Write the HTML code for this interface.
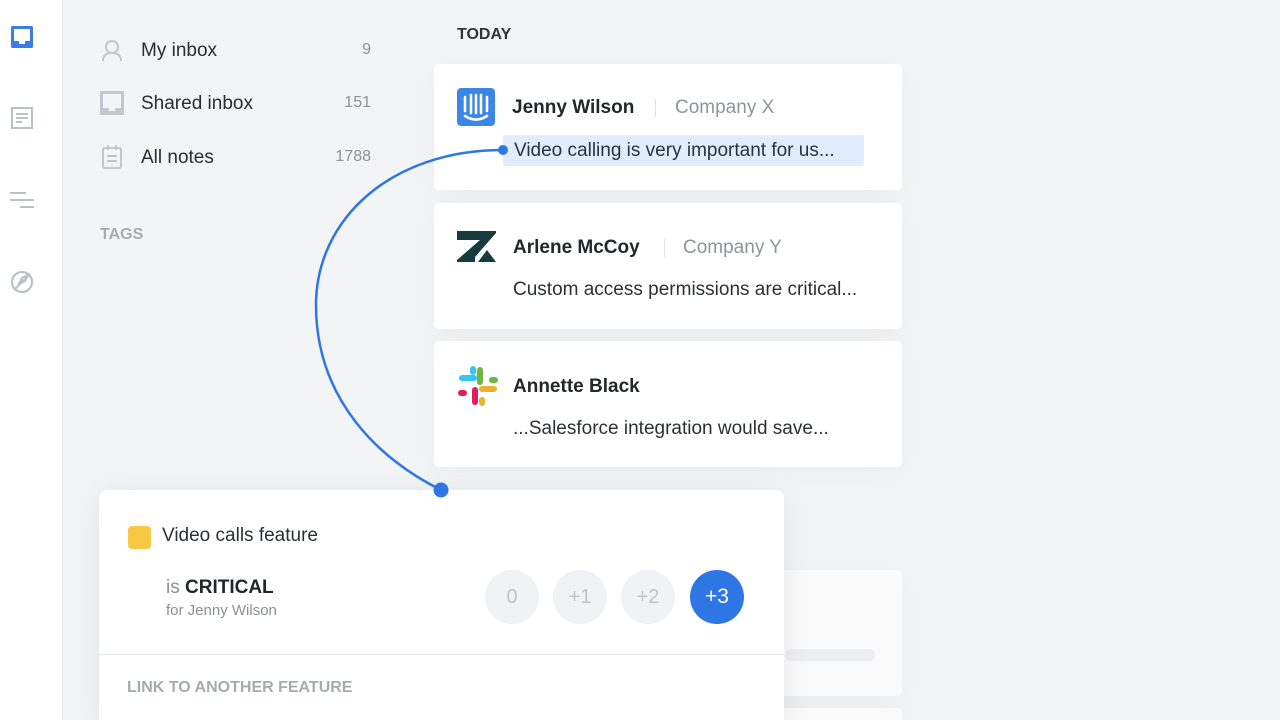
<!DOCTYPE html>
<html style="width:1280px;height:720px;overflow:hidden"><head><style>
*{margin:0;padding:0;box-sizing:border-box}
body{width:1280px;height:720px;overflow:hidden;background:#f3f4f6;font-family:"Liberation Sans",sans-serif;position:relative;color:#22252b}
.rail{position:absolute;left:0;top:0;width:63px;height:720px;background:#fff;border-right:1px solid #e6e8ec}
.abs{position:absolute}
.nav{position:absolute;left:141px;font-size:19px;color:#2a2d33}
.cnt{position:absolute;right:909px;font-size:16px;color:#8d9198;text-align:right}
.card{position:absolute;left:434px;width:468px;background:#fff;border-radius:5px;box-shadow:0 6px 30px rgba(0,0,0,.04)}
.name{position:absolute;font-size:19px;font-weight:bold;color:#23262b}
.co{position:absolute;font-size:19px;color:#8f949b}
.msg{position:absolute;font-size:19px;color:#2d3036}
.sep{position:absolute;width:1px;height:18px;background:#dcdfe3}
.circ{position:absolute;top:570px;width:54px;height:54px;border-radius:50%;background:#f1f2f4;color:#c0c4c9;font-size:20px;text-align:center;line-height:54px}
</style></head><body>
<div class="rail"></div>
<svg class="abs" style="left:10px;top:25px" width="26" height="26" viewBox="0 0 26 26"><rect x="1" y="1" width="22" height="22" rx="1.5" fill="#3b7de6"/><rect x="4" y="4" width="16" height="12" fill="#fff"/><rect x="9" y="16" width="6" height="3" fill="#fff"/></svg>
<svg class="abs" style="left:10px;top:106px" width="26" height="26" viewBox="0 0 26 26" fill="none" stroke="#bcc1c8" stroke-width="2"><rect x="2" y="2" width="20" height="20"/><path d="M6 8h12M6 12h12M6 16h6"/></svg>
<svg class="abs" style="left:10px;top:190px" width="26" height="20" viewBox="0 0 26 20" stroke="#bcc1c8" stroke-width="2"><path d="M0 3h16M0 10h24M10 17h14"/></svg>
<svg class="abs" style="left:10px;top:269px" width="26" height="26" viewBox="0 0 26 26" fill="none" stroke="#bcc1c8" stroke-width="2.2"><circle cx="12" cy="13" r="10"/><path d="M4 21L20 5M9 15l3-6 6-3-3 6z"/></svg>
<svg class="abs" style="left:101px;top:39px" width="22" height="24" viewBox="0 0 22 24" fill="none" stroke="#c3c7cd" stroke-width="2"><circle cx="11" cy="8" r="6"/><path d="M2 22c0-6 4-8 9-8s9 2 9 8"/></svg>
<div class="nav" style="top:40px">My inbox</div><div class="cnt" style="top:41px">9</div>
<svg class="abs" style="left:100px;top:91px" width="24" height="24" viewBox="0 0 24 24"><rect x="0" y="0" width="24" height="24" rx="1" fill="#c3c7cd"/><rect x="3" y="3" width="18" height="14" fill="#f3f4f6"/><rect x="9" y="17" width="6" height="3" fill="#f3f4f6"/></svg>
<div class="nav" style="top:93px">Shared inbox</div><div class="cnt" style="top:94px">151</div>
<svg class="abs" style="left:101px;top:144px" width="22" height="26" viewBox="0 0 22 26" fill="none" stroke="#c3c7cd" stroke-width="2"><rect x="2" y="4" width="18" height="20" rx="2"/><path d="M7 1v5M15 1v5M6 12h10M6 17h10"/></svg>
<div class="nav" style="top:147px">All notes</div><div class="cnt" style="top:148px">1788</div>
<div class="abs" style="left:100px;top:226px;font-size:16px;font-weight:bold;color:#a6abb2">TAGS</div>
<div class="abs" style="left:457px;top:26px;font-size:16px;font-weight:bold;color:#30343a">TODAY</div>
<div class="card" style="top:64px;height:126px"></div>
<div class="card" style="top:203px;height:126px"></div>
<div class="card" style="top:341px;height:126px"></div>
<div class="card" style="top:570px;height:126px;left:740px;width:162px;background:#fafafb"></div>
<div class="abs" style="left:785px;top:649px;width:90px;height:12px;border-radius:6px;background:#eceef1"></div>
<div class="card" style="top:708px;height:30px;left:740px;width:162px;background:#fafafb"></div>
<svg class="abs" style="left:457px;top:88px" width="38" height="38" viewBox="0 0 38 38"><rect width="38" height="38" rx="4" fill="#3b86e6"/><g stroke="#fff" stroke-width="2.6" stroke-linecap="round"><path d="M8 9v14M14 7v18M19 7v18M24 7v18M30 9v14"/><path d="M8 28q11 7 22 0" fill="none"/></g></svg>
<div class="name" style="left:512px;top:97px">Jenny Wilson</div><div class="sep" style="left:655px;top:99px"></div><div class="co" style="left:675px;top:97px">Company X</div>
<div class="abs" style="left:503px;top:135px;width:361px;height:31px;background:#e1ecfc;border-radius:2px"></div>
<div class="msg" style="left:514px;top:140px;color:#2a3440">Video calling is very important for us...</div>
<svg class="abs" style="left:457px;top:231px" width="39" height="31" viewBox="0 0 39 31" fill="#173a3f"><polygon points="0,0 39,0 39,2 18,26 18,31 0,31 0,29 23,9 0,9"/><polygon points="21,31 39,31 30,19"/></svg>
<div class="name" style="left:513px;top:237px">Arlene McCoy</div><div class="sep" style="left:664px;top:239px"></div><div class="co" style="left:683px;top:237px">Company Y</div>
<div class="msg" style="left:513px;top:279px">Custom access permissions are critical...</div>
<svg class="abs" style="left:458px;top:366px" width="40" height="40" viewBox="0 0 40 40" stroke-linecap="round" stroke-width="6"><path d="M4 12h12" stroke="#36c5f0"/><path d="M22 4v12" stroke="#6ab84a"/><path d="M36 23H24" stroke="#ecb22e"/><path d="M17 24v12" stroke="#e01e5a"/><path d="M15 3v3" stroke="#36c5f0"/><path d="M34 14h3" stroke="#6ab84a"/><path d="M24 34v3" stroke="#ecb22e"/><path d="M3 27h3" stroke="#e01e5a"/></svg>
<div class="name" style="left:513px;top:376px">Annette Black</div>
<div class="msg" style="left:513px;top:418px">...Salesforce integration would save...</div>
<div class="abs" style="left:99px;top:490px;width:685px;height:240px;background:#fff;border-radius:8px;box-shadow:0 4px 30px rgba(0,0,0,.08)"></div>
<div class="abs" style="left:128px;top:526px;width:23px;height:23px;background:#f7c843;border-radius:4px"></div>
<div class="abs" style="left:162px;top:525px;font-size:19px;color:#2d3036">Video calls feature</div>
<div class="abs" style="left:166px;top:577px;font-size:19px;color:#8c9097">is <b style="color:#23262b">CRITICAL</b></div>
<div class="abs" style="left:166px;top:602px;font-size:15px;color:#8c9097">for Jenny Wilson</div>
<div class="circ" style="left:485px">0</div><div class="circ" style="left:553px">+1</div><div class="circ" style="left:621px">+2</div>
<div class="circ" style="left:690px;background:#2f76e5;color:#fff;font-size:21px">+3</div>
<div class="abs" style="left:99px;top:654px;width:685px;height:1px;background:#e4e7ec"></div>
<div class="abs" style="left:127px;top:679px;font-size:16px;font-weight:bold;color:#a6abb2">LINK TO ANOTHER FEATURE</div>
<svg class="abs" style="left:0;top:0" width="1280" height="720"><path d="M503 150C390 150 316 220 316 305C316 400 380 460 441 490" fill="none" stroke="#2f76e5" stroke-width="2.5"/><circle cx="503" cy="150" r="5" fill="#2f76e5"/><circle cx="441" cy="490" r="7.5" fill="#2f76e5"/></svg>
</body></html>
